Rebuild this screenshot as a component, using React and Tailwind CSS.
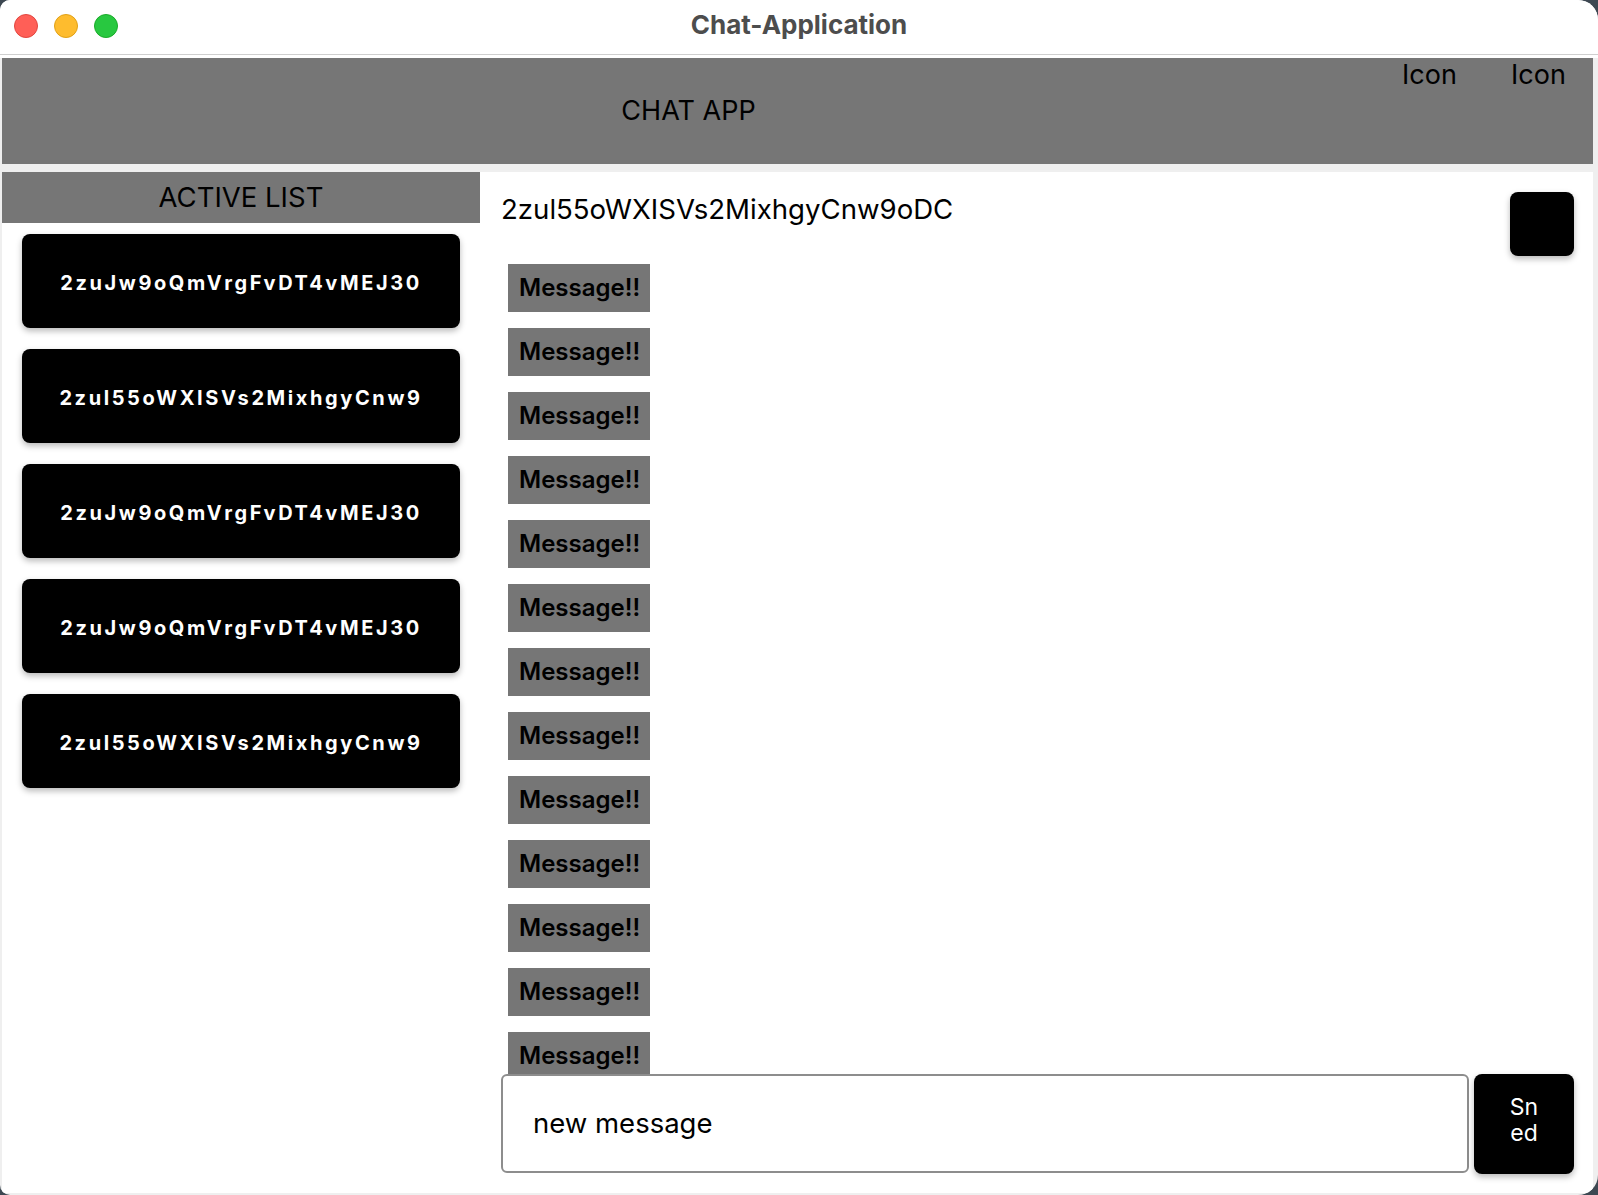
import React from "react";

const users = [
  "2zuJw9oQmVrgFvDT4vMEJ30",
  "2zul55oWXISVs2MixhgyCnw9",
  "2zuJw9oQmVrgFvDT4vMEJ30",
  "2zuJw9oQmVrgFvDT4vMEJ30",
  "2zul55oWXISVs2MixhgyCnw9",
];

const messages = Array.from({ length: 13 }, (_, i) => i);

const TitleBar = () => (
  <>
    <div className="relative h-[55px] shrink-0 bg-white border-b border-[#cfcfcf] flex justify-center pt-[5px]">
      {/* Traffic lights */}
      <div className="absolute left-[14px] top-[14px] flex gap-[16px]">
        <span className="w-[24px] h-[24px] rounded-full bg-[#ff5f57] border border-[#e2463f]" />
        <span className="w-[24px] h-[24px] rounded-full bg-[#febc2e] border border-[#e1a116]" />
        <span className="w-[24px] h-[24px] rounded-full bg-[#28c840] border border-[#1aab29]" />
      </div>
      <span className="text-[26px] font-bold text-[#4d4d4d] leading-normal">
        Chat-Application
      </span>
    </div>
    <div className="h-[3px] shrink-0 bg-white" />
  </>
);

const Header = () => (
  <div className="h-[106px] shrink-0 bg-[#767676] flex text-[27px] text-black">
    <div className="flex-1 flex items-center justify-center">CHAT APP</div>
    <div className="flex items-start">
      <div className="w-[109px] text-center leading-[34px]">Icon</div>
      <div className="w-[109px] text-center leading-[34px]">Icon</div>
    </div>
  </div>
);

const Sidebar = () => (
  <aside className="w-[478px] shrink-0 flex flex-col bg-white">
    <div className="h-[51px] bg-[#767676] flex items-center justify-center text-[27.5px] text-black">
      ACTIVE LIST
    </div>
    <div className="flex flex-col gap-[21px] px-[20px] pt-[11px]">
      {users.map((id, i) => (
        <button
          key={i}
          className="h-[94px] rounded-[8px] bg-black text-white text-[20px] font-bold tracking-[2.6px] flex items-center justify-center pt-[3px] shadow-[0_3px_6px_rgba(0,0,0,0.28)]"
        >
          {id}
        </button>
      ))}
    </div>
  </aside>
);

const ChatPanel = () => (
  <main className="flex-1 min-w-0 flex flex-col bg-white pl-[21px] pr-[19px] pt-[20px] pb-[19px]">
    {/* Chat header */}
    <div className="flex justify-between items-start shrink-0">
      <span className="text-[27.6px] text-black leading-[34px]">
        2zul55oWXISVs2MixhgyCnw9oDC
      </span>
      <button className="w-[64px] h-[64px] rounded-[8px] bg-black shadow-[0_3px_6px_rgba(0,0,0,0.28)]" />
    </div>

    {/* Messages */}
    <div className="flex-1 min-h-0 overflow-hidden pt-[8px] pl-[7px] flex flex-col gap-[16px]">
      {messages.map((i) => (
        <div
          key={i}
          className="w-[142px] h-[48px] shrink-0 bg-[#767676] pl-[11px] flex items-center text-[24px] font-semibold text-black"
        >
          Message!!
        </div>
      ))}
    </div>

    {/* Input */}
    <div className="flex gap-[5px] h-[100px] shrink-0">
      <div className="flex-1 h-[99px] rounded-[6px] border-2 border-[#8d8d8d] flex items-center pl-[30px] text-[27.5px] text-black">
        new message
      </div>
      <button className="w-[100px] h-[100px] rounded-[8px] bg-black text-white text-[23px] leading-[26px] flex items-center justify-center pb-[8px] shadow-[0_3px_6px_rgba(0,0,0,0.28)]">
        <span className="inline-block w-[40px] break-all text-center">Sned</span>
      </button>
    </div>
  </main>
);

export default function App() {
  return (
    <div
      className="w-[1598px] h-[1195px] bg-[#3d4852] overflow-hidden"
      style={{ fontFamily: "Inter, 'Noto Sans', sans-serif" }}
    >
      <div className="h-full flex flex-col bg-[#efefef] rounded-l-[10px] rounded-r-[20px] overflow-hidden">
        <TitleBar />
        <div className="flex-1 min-h-0 flex flex-col pl-[2px] pr-[5px] pb-[2px]">
          <Header />
          <div className="flex-1 min-h-0 flex mt-[8px]">
            <Sidebar />
            <ChatPanel />
          </div>
        </div>
      </div>
    </div>
  );
}
